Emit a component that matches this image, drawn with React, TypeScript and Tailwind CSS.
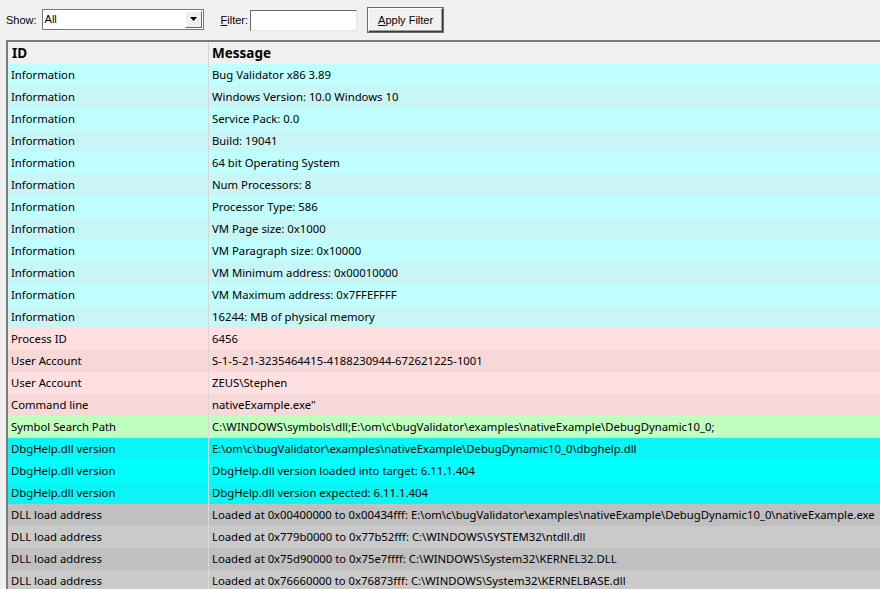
import React from 'react';

type Row = { id: string; msg: string; kind: 'info' | 'proc' | 'sym' | 'dbg' | 'dll' };

const ROWS: Row[] = [
  { id: 'Information', msg: 'Bug Validator x86 3.89', kind: 'info' },
  { id: 'Information', msg: 'Windows Version: 10.0 Windows 10', kind: 'info' },
  { id: 'Information', msg: 'Service Pack: 0.0', kind: 'info' },
  { id: 'Information', msg: 'Build: 19041', kind: 'info' },
  { id: 'Information', msg: '64 bit Operating System', kind: 'info' },
  { id: 'Information', msg: 'Num Processors: 8', kind: 'info' },
  { id: 'Information', msg: 'Processor Type: 586', kind: 'info' },
  { id: 'Information', msg: 'VM Page size: 0x1000', kind: 'info' },
  { id: 'Information', msg: 'VM Paragraph size: 0x10000', kind: 'info' },
  { id: 'Information', msg: 'VM Minimum address: 0x00010000', kind: 'info' },
  { id: 'Information', msg: 'VM Maximum address: 0x7FFEFFFF', kind: 'info' },
  { id: 'Information', msg: '16244: MB of physical memory', kind: 'info' },
  { id: 'Process ID', msg: '6456', kind: 'proc' },
  { id: 'User Account', msg: 'S-1-5-21-3235464415-4188230944-672621225-1001', kind: 'proc' },
  { id: 'User Account', msg: 'ZEUS\\Stephen', kind: 'proc' },
  { id: 'Command line', msg: 'nativeExample.exe"', kind: 'proc' },
  { id: 'Symbol Search Path', msg: 'C:\\WINDOWS\\symbols\\dll;E:\\om\\c\\bugValidator\\examples\\nativeExample\\DebugDynamic10_0;', kind: 'sym' },
  { id: 'DbgHelp.dll version', msg: 'E:\\om\\c\\bugValidator\\examples\\nativeExample\\DebugDynamic10_0\\dbghelp.dll', kind: 'dbg' },
  { id: 'DbgHelp.dll version', msg: 'DbgHelp.dll version loaded into target: 6.11.1.404', kind: 'dbg' },
  { id: 'DbgHelp.dll version', msg: 'DbgHelp.dll version expected: 6.11.1.404', kind: 'dbg' },
  { id: 'DLL load address', msg: 'Loaded at 0x00400000 to 0x00434fff: E:\\om\\c\\bugValidator\\examples\\nativeExample\\DebugDynamic10_0\\nativeExample.exe', kind: 'dll' },
  { id: 'DLL load address', msg: 'Loaded at 0x779b0000 to 0x77b52fff: C:\\WINDOWS\\SYSTEM32\\ntdll.dll', kind: 'dll' },
  { id: 'DLL load address', msg: 'Loaded at 0x75d90000 to 0x75e7ffff: C:\\WINDOWS\\System32\\KERNEL32.DLL', kind: 'dll' },
  { id: 'DLL load address', msg: 'Loaded at 0x76660000 to 0x76873fff: C:\\WINDOWS\\System32\\KERNELBASE.dll', kind: 'dll' },
];

// [even, odd] row backgrounds
const COLORS: Record<Row['kind'], [string, string]> = {
  info: ['bg-[#c0ffff]', 'bg-[#c8f6f6]'],
  proc: ['bg-[#ffe0e0]', 'bg-[#f6d8d8]'],
  sym: ['bg-[#c0ffc0]', 'bg-[#c0ffc0]'],
  dbg: ['bg-[#00ffff]', 'bg-[#0af6f6]'],
  dll: ['bg-[#c0c0c0]', 'bg-[#cacaca]'],
};

export default function App() {
  return (
    <div
      className="flex h-[589px] w-[880px] flex-col overflow-hidden bg-[#f0f0f0] text-black"
      style={{ fontFamily: '"Noto Sans", "Open Sans", sans-serif' }}
    >
      {/* toolbar */}
      <div
        className="flex h-[40px] shrink-0 items-center pl-[6px] text-[11px]"
        style={{ fontFamily: '"Liberation Sans", Arial, sans-serif' }}
      >
        <span className="mr-[5px] pt-[1px]">Show:</span>
        <div className="flex h-[21px] w-[162px] items-center border border-[#7a7a7a] bg-white pl-[2px] -mt-[2px]">
          <span className="flex-1">All</span>
          <div className="mr-[1px] flex h-[17px] w-[17px] items-center justify-center border border-t-white border-l-white border-b-[#696969] border-r-[#696969] bg-[#f0f0f0]">
            <svg width="7" height="4" viewBox="0 0 7 4">
              <path d="M0 0h7L3.5 4z" fill="#000" />
            </svg>
          </div>
        </div>
        <span className="ml-[17px] mr-[2px] pt-[1px]">
          <span className="underline">F</span>ilter:
        </span>
        <div className="h-[21px] w-[107px] border border-t-[#696969] border-l-[#696969] border-b-[#e3e3e3] border-r-[#e3e3e3] bg-white" />
        <button className="ml-[11px] h-[24px] w-[75px] border border-t-white border-l-white border-b-[#3c3c3c] border-r-[#3c3c3c] bg-[#f0f0f0] shadow-[inset_-1px_-1px_0_#a0a0a0,0_0_0_1px_#6a6a6a] text-[11px]">
          <span className="underline">A</span>pply Filter
        </button>
      </div>

      {/* list */}
      <div className="ml-[6px] flex min-h-0 flex-1 flex-col border-t-2 border-l-2 border-t-[#7a7a7a] border-l-[#7a7a7a]">
        <div className="flex h-[22px] shrink-0 items-center bg-[#f0f0f0] text-[13.5px] font-bold">
          <div className="flex h-full w-[201px] items-center border-r border-[#d5d5d5] pl-[4px]">ID</div>
          <div className="pl-[3px]">Message</div>
        </div>
        {ROWS.map((r, i) => (
          <div
            key={i}
            className={`flex h-[22px] shrink-0 items-center text-[11.3px] whitespace-nowrap ${COLORS[r.kind][i % 2]}`}
          >
            <div className="flex h-full w-[201px] shrink-0 items-center border-r border-[#d8d8d8] pl-[3px]">{r.id}</div>
            <div className="pl-[3px]">{r.msg}</div>
          </div>
        ))}
      </div>
    </div>
  );
}
